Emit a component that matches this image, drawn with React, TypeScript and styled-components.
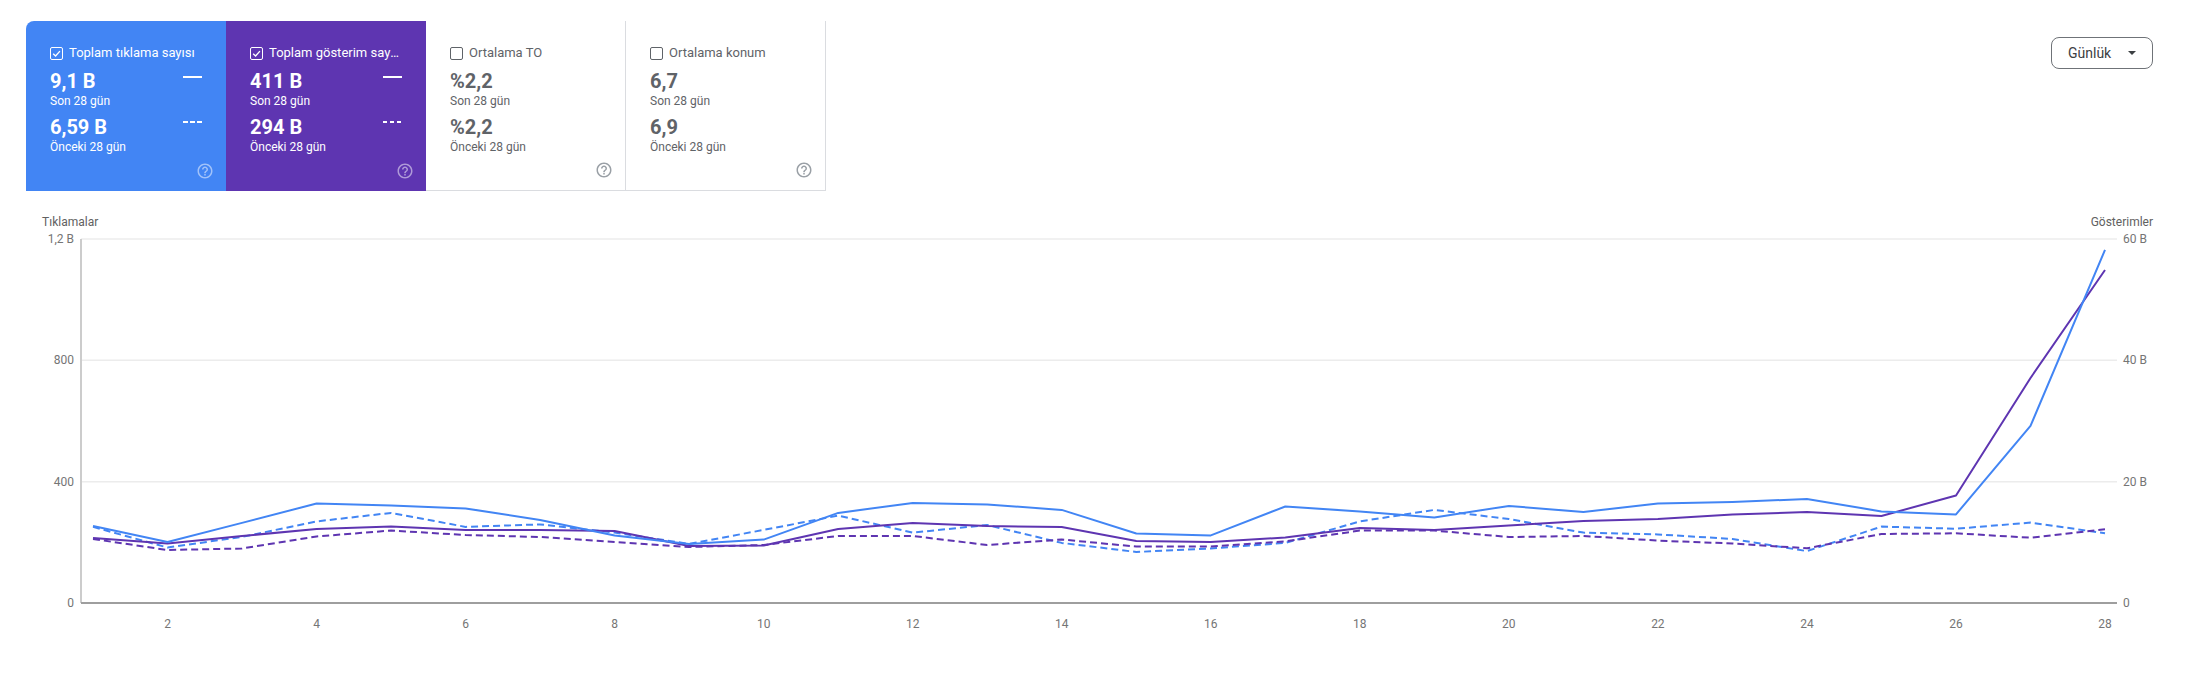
import React from "react";
import styled, { createGlobalStyle, css } from "styled-components";

const GlobalStyle = createGlobalStyle`
  html, body { margin: 0; padding: 0; background: #ffffff; }
  body { font-family: Roboto, "Noto Sans", "Liberation Sans", sans-serif; color: #202124; }
  * { box-sizing: border-box; }
`;

const BLUE = "#4285F4";
const PURPLE = "#5E35B1";

const Page = styled.div`
  width: 2190px;
  height: 676px;
  overflow: hidden;
  display: flex;
  flex-direction: column;
`;

const Header = styled.div`
  display: flex;
  justify-content: space-between;
  align-items: flex-start;
  padding: 21px 37px 0 26px;
`;

const Cards = styled.div`
  display: flex;
`;

type Variant = "blue" | "purple" | "plain";

const Card = styled.div<{ $variant: Variant; $first?: boolean }>`
  width: 200px;
  height: 170px;
  display: flex;
  flex-direction: column;
  padding: 24px 24px 11px 24px;
  ${({ $variant }) =>
    $variant === "blue"
      ? css`background: ${BLUE}; color: #ffffff;`
      : $variant === "purple"
      ? css`background: ${PURPLE}; color: #ffffff;`
      : css`
          background: #ffffff;
          color: #5f6368;
          border-right: 1px solid #dadce0;
          border-bottom: 1px solid #dadce0;
        `}
  ${({ $first }) => $first && css`border-top-left-radius: 8px;`}
`;

const LabelRow = styled.div`
  display: flex;
  align-items: center;
  height: 16px;
  gap: 6px;
  margin-bottom: 8px;
`;

const Check = styled.span<{ $checked: boolean }>`
  flex: 0 0 auto;
  width: 13px;
  height: 13px;
  border-radius: 2px;
  border: 1.5px solid ${({ $checked }) => ($checked ? "#ffffff" : "#5f6368")};
  display: flex;
  align-items: center;
  justify-content: center;
`;

const LabelText = styled.span`
  font-size: 13px;
  line-height: 16px;
  white-space: nowrap;
  overflow: hidden;
  text-overflow: ellipsis;
  min-width: 0;
`;

const ValueRow = styled.div<{ $second?: boolean }>`
  display: flex;
  justify-content: space-between;
  align-items: flex-start;
  height: 24px;
  ${({ $second }) => $second && css`margin-top: 6px;`}
`;

const Value = styled.span`
  font-size: 20px;
  line-height: 24px;
  font-weight: 700;
`;

const Legend = styled.span<{ $dashed?: boolean }>`
  width: 19px;
  height: 2px;
  margin-top: ${({ $dashed }) => ($dashed ? "6px" : "7px")};
  ${({ $dashed }) =>
    $dashed
      ? css`background: repeating-linear-gradient(90deg, #ffffff 0 4.5px, transparent 4.5px 7px);`
      : css`background: #ffffff;`}
`;

const Sub = styled.div`
  font-size: 12px;
  line-height: 16px;
`;

const HelpWrap = styled.div<{ $light: boolean }>`
  margin-top: auto;
  align-self: flex-end;
  margin-right: -12px;
  width: 18px;
  height: 18px;
  color: ${({ $light }) => ($light ? "rgba(255,255,255,0.5)" : "#9aa0a6")};
  svg { display: block; }
`;

const DropButton = styled.button`
  margin-top: 16px;
  width: 102px;
  height: 32px;
  border: 1px solid #6f7378;
  border-radius: 8px;
  background: #ffffff;
  display: flex;
  align-items: center;
  justify-content: space-between;
  padding: 0 16px 0 16px;
  font-family: Roboto, "Liberation Sans", sans-serif;
  font-size: 14px;
  color: #3c4043;
  cursor: pointer;
`;

const Caret = styled.span`
  width: 0;
  height: 0;
  border-left: 4.5px solid transparent;
  border-right: 4.5px solid transparent;
  border-top: 4.5px solid #3c4043;
`;

const ChartSection = styled.div`
  margin-top: 23px;
  display: flex;
  flex-direction: column;
`;

const AxisTitles = styled.div`
  display: flex;
  justify-content: space-between;
  padding: 0 37px 0 42px;
  font-size: 12px;
  line-height: 16px;
  color: #616161;
`;

const ChartSvg = styled.svg`
  display: block;
  font-family: Roboto, "Liberation Sans", sans-serif;
  font-size: 12px;
`;

const HelpIcon = () => (
  <svg width="18" height="18" viewBox="0 0 24 24" fill="currentColor">
    <path d="M11 18h2v-2h-2v2zm1-16C6.48 2 2 6.48 2 12s4.48 10 10 10 10-4.48 10-10S17.52 2 12 2zm0 18c-4.41 0-8-3.59-8-8s3.59-8 8-8 8 3.59 8 8-3.59 8-8 8zm0-14c-2.21 0-4 1.79-4 4h2c0-1.1.9-2 2-2s2 .9 2 2c0 2-3 1.75-3 5h2c0-2.25 3-2.5 3-5 0-2.21-1.79-4-4-4z" />
  </svg>
);

const CheckMark = () => (
  <svg width="9" height="9" viewBox="0 0 10 10">
    <path d="M1.3 5.2 L4 7.8 L8.8 2.3" fill="none" stroke="#ffffff" strokeWidth="1.5" />
  </svg>
);

type Metric = {
  label: string;
  variant: Variant;
  current: string;
  previous: string;
  checked: boolean;
};

const metrics: Metric[] = [
  { label: "Toplam tıklama sayısı", variant: "blue", current: "9,1 B", previous: "6,59 B", checked: true },
  { label: "Toplam gösterim sayısı", variant: "purple", current: "411 B", previous: "294 B", checked: true },
  { label: "Ortalama TO", variant: "plain", current: "%2,2", previous: "%2,2", checked: false },
  { label: "Ortalama konum", variant: "plain", current: "6,7", previous: "6,9", checked: false },
];

const clicks = [254, 201, 264, 328, 321, 312, 274, 223, 195, 209, 297, 330, 325, 307, 229, 223, 318, 302, 282, 320, 300, 328, 333, 343, 302, 292, 584, 1164];
const impressions = [10.7, 9.81, 11.04, 12.2, 12.6, 12.03, 12.03, 11.87, 9.4, 9.48, 12.2, 13.19, 12.69, 12.53, 10.22, 10.06, 10.8, 12.36, 12.03, 12.78, 13.52, 13.85, 14.59, 15.0, 14.34, 17.72, 37.09, 54.89];
const prevClicks = [251, 183, 218, 269, 297, 251, 259, 232, 195, 241, 288, 232, 257, 198, 168, 180, 198, 269, 307, 277, 232, 226, 211, 171, 252, 245, 265, 230];
const prevImpr = [10.55, 8.74, 8.98, 10.96, 11.95, 11.21, 10.88, 10.06, 9.23, 9.56, 11.04, 11.04, 9.56, 10.47, 9.3, 9.3, 10.17, 11.93, 11.93, 10.88, 11.04, 10.29, 9.81, 9.02, 11.37, 11.49, 10.76, 12.15];

const PLOT_LEFT = 81;
const PLOT_RIGHT = 2117;
const PLOT_TOP = 9;
const PLOT_BOTTOM = 373;
const PLOT_H = PLOT_BOTTOM - PLOT_TOP;

const xFor = (i: number) => 93 + (i * 2012) / 27;
const yLeft = (v: number) => PLOT_BOTTOM - (v / 1200) * PLOT_H;
const yRight = (v: number) => PLOT_BOTTOM - (v / 60) * PLOT_H;

const pts = (data: number[], f: (v: number) => number) =>
  data.map((v, i) => `${xFor(i).toFixed(1)},${f(v).toFixed(1)}`).join(" ");

const leftTicks = ["0", "400", "800", "1,2 B"];
const rightTicks = ["0", "20 B", "40 B", "60 B"];

const Chart = () => (
  <ChartSvg width={2190} height={420} viewBox="0 0 2190 420">
    {[1, 2, 3].map((k) => {
      const y = PLOT_BOTTOM - (k * PLOT_H) / 3;
      return <line key={k} x1={PLOT_LEFT} x2={PLOT_RIGHT} y1={y} y2={y} stroke="#ececec" strokeWidth={1.5} />;
    })}
    {leftTicks.map((t, k) => (
      <text key={t} x={74} y={PLOT_BOTTOM - (k * PLOT_H) / 3} textAnchor="end" dominantBaseline="central" fill="#757575">
        {t}
      </text>
    ))}
    {rightTicks.map((t, k) => (
      <text key={t} x={2123} y={PLOT_BOTTOM - (k * PLOT_H) / 3} textAnchor="start" dominantBaseline="central" fill="#757575">
        {t}
      </text>
    ))}
    <line x1={PLOT_LEFT} x2={PLOT_LEFT} y1={PLOT_TOP} y2={PLOT_BOTTOM} stroke="#cccccc" strokeWidth={2} />
    <line x1={PLOT_LEFT} x2={PLOT_RIGHT} y1={PLOT_BOTTOM} y2={PLOT_BOTTOM} stroke="#9e9e9e" strokeWidth={2} />
    {Array.from({ length: 14 }, (_, k) => {
      const day = (k + 1) * 2;
      return (
        <text key={day} x={xFor(day - 1)} y={394} textAnchor="middle" dominantBaseline="central" fill="#757575">
          {day}
        </text>
      );
    })}
    <polyline points={pts(prevClicks, yLeft)} fill="none" stroke={BLUE} strokeWidth={2} strokeDasharray="7 4" strokeLinejoin="round" />
    <polyline points={pts(prevImpr, yRight)} fill="none" stroke={PURPLE} strokeWidth={2} strokeDasharray="7 4" strokeLinejoin="round" />
    <polyline points={pts(impressions, yRight)} fill="none" stroke={PURPLE} strokeWidth={2} strokeLinejoin="round" />
    <polyline points={pts(clicks, yLeft)} fill="none" stroke={BLUE} strokeWidth={2} strokeLinejoin="round" />
  </ChartSvg>
);

export default function App() {
  return (
    <>
      <GlobalStyle />
      <Page>
        <Header>
          <Cards>
            {metrics.map((m, i) => {
              const light = m.variant !== "plain";
              return (
                <Card key={m.label} $variant={m.variant} $first={i === 0}>
                  <LabelRow>
                    <Check $checked={m.checked}>{m.checked && <CheckMark />}</Check>
                    <LabelText>{m.label}</LabelText>
                  </LabelRow>
                  <ValueRow>
                    <Value>{m.current}</Value>
                    {light && <Legend />}
                  </ValueRow>
                  <Sub>Son 28 gün</Sub>
                  <ValueRow $second>
                    <Value>{m.previous}</Value>
                    {light && <Legend $dashed />}
                  </ValueRow>
                  <Sub>Önceki 28 gün</Sub>
                  <HelpWrap $light={light}>
                    <HelpIcon />
                  </HelpWrap>
                </Card>
              );
            })}
          </Cards>
          <DropButton>
            <span>Günlük</span>
            <Caret />
          </DropButton>
        </Header>
        <ChartSection>
          <AxisTitles>
            <span>Tıklamalar</span>
            <span>Gösterimler</span>
          </AxisTitles>
          <Chart />
        </ChartSection>
      </Page>
    </>
  );
}
